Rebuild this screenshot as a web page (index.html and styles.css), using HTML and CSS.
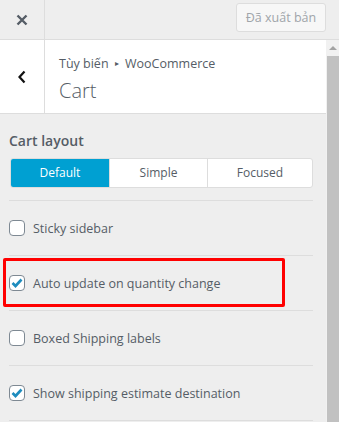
FILE: index.html
```html
<!DOCTYPE html>
<html lang="vi">
<head>
    <meta charset="UTF-8">
    <meta name="viewport" content="width=device-width, initial-scale=1.0">
    <title>Tùy biến - Cart</title>
    <link rel="stylesheet" href="styles.css">
</head>
<body>
    <div class="topbar">
        <div class="close-btn">
            <svg width="12" height="12" viewBox="0 0 12 12"><path d="M1.5 1.5 L10.5 10.5 M10.5 1.5 L1.5 10.5" stroke="#555d66" stroke-width="2.4" fill="none"/></svg>
        </div>
        <div class="topbar-right">
            <button class="publish-button">Đã xuất bản</button>
        </div>
    </div>
    <div class="main">
        <div class="panel">
            <div class="panel-header">
                <div class="back-btn">
                    <svg width="10" height="14" viewBox="0 0 10 14"><path d="M7.5 1.5 L2.5 7 L7.5 12.5" stroke="#111" stroke-width="2.2" fill="none"/></svg>
                </div>
                <div class="panel-title">
                    <div class="breadcrumb">Tùy biến <span class="arrow">▸</span> WooCommerce</div>
                    <div class="title">Cart</div>
                </div>
            </div>
            <div class="controls">
                <div class="control layout-control">
                    <div class="control-label">Cart layout</div>
                    <div class="button-group">
                        <div class="seg seg-default active">Default</div>
                        <div class="seg seg-simple">Simple</div>
                        <div class="seg seg-focused">Focused</div>
                    </div>
                </div>
                <div class="control">
                    <label class="check-row"><span class="checkbox"></span>Sticky sidebar</label>
                </div>
                <div class="control highlighted">
                    <label class="check-row"><span class="checkbox checked"><svg width="12" height="10" viewBox="0 0 12 10"><path d="M1.5 5 L4.5 8 L10.5 1.5" stroke="#1e8cbe" stroke-width="2.6" fill="none"/></svg></span>Auto update on quantity change</label>
                </div>
                <div class="control">
                    <label class="check-row"><span class="checkbox"></span>Boxed Shipping labels</label>
                </div>
                <div class="control">
                    <label class="check-row"><span class="checkbox checked"><svg width="12" height="10" viewBox="0 0 12 10"><path d="M1.5 5 L4.5 8 L10.5 1.5" stroke="#1e8cbe" stroke-width="2.6" fill="none"/></svg></span>Show shipping estimate destination</label>
                </div>
            </div>
        </div>
        <div class="scrollbar">
            <div class="scroll-arrow"></div>
            <div class="scroll-thumb"></div>
        </div>
    </div>
</body>
</html>
```

FILE: styles.css
```css
body {
    margin: 0;
    background: #eee;
    font-family: 'Open Sans', sans-serif;
    color: #555d66;
    height: 422px;
    overflow: hidden;
}

.topbar {
    display: flex;
    height: 39px;
    border-bottom: 1px solid #ddd;
    background: #eee;
}

.close-btn {
    width: 44px;
    border-right: 1px solid #ddd;
    display: flex;
    align-items: center;
    justify-content: center;
}

.topbar-right {
    flex: 1;
    display: flex;
    justify-content: flex-end;
    padding: 3px 13px 0 0;
}

.publish-button {
    width: 90px;
    height: 29px;
    background: #f7f7f7;
    border: 1px solid #ddd;
    border-radius: 3px;
    color: #a0a5aa;
    font-family: 'Open Sans', sans-serif;
    font-size: 12.5px;
    padding: 0;
}

.main {
    display: flex;
    height: 382px;
}

.panel {
    width: 326px;
}

.panel-header {
    display: flex;
    height: 73px;
    background: #fff;
    border-bottom: 1px solid #ddd;
}

.back-btn {
    width: 44px;
    border-right: 1px solid #ddd;
    display: flex;
    align-items: center;
    justify-content: center;
}

.panel-title {
    padding: 14px 0 0 14px;
}

.breadcrumb {
    font-size: 12.5px;
    line-height: 18px;
}

.breadcrumb .arrow {
    font-size: 8px;
    vertical-align: 2px;
    margin: 0 3px;
}

.title {
    font-size: 20px;
    font-weight: 300;
    line-height: 28px;
    margin-top: 4px;
}

.controls {
    padding: 0 13px 0 9px;
}

.control {
    border-bottom: 1px solid #ddd;
    height: 54px;
    display: flex;
    align-items: center;
    position: relative;
}

.layout-control {
    display: block;
    height: auto;
    padding: 17px 0 12px;
}

.control-label {
    font-size: 14px;
    font-weight: 600;
    line-height: 20px;
    margin-bottom: 7px;
}

.button-group {
    display: flex;
    margin-left: 1px;
    border: 1px solid #ddd;
    border-radius: 3px;
    background: #fff;
    overflow: hidden;
}

.seg {
    height: 28px;
    line-height: 28px;
    text-align: center;
    font-size: 12px;
    border-left: 1px solid #ddd;
}

.seg-default {
    width: 98px;
    border-left: none;
}

.seg-simple {
    width: 97px;
}

.seg-focused {
    flex: 1;
}

.seg.active {
    background: #00a0d2;
    color: #fff;
}

.check-row {
    display: flex;
    align-items: center;
    font-size: 12.5px;
}

.checkbox {
    width: 14px;
    height: 14px;
    border: 1px solid #7e8993;
    border-radius: 4px;
    background: #fff;
    margin-right: 8px;
    display: flex;
    align-items: center;
    justify-content: center;
}

.highlighted::before {
    content: "";
    position: absolute;
    left: -6px;
    top: 2px;
    width: 276px;
    height: 43px;
    border: 3px solid #ff0000;
    border-radius: 2px;
}

.scrollbar {
    width: 13px;
    background: #f1f1f1;
    display: flex;
    flex-direction: column;
}

.scroll-arrow {
    height: 16px;
    position: relative;
}

.scroll-arrow::after {
    content: "";
    position: absolute;
    left: 3px;
    top: 6px;
    border-left: 4px solid transparent;
    border-right: 4px solid transparent;
    border-bottom: 4px solid #a3a3a3;
}

.scroll-thumb {
    flex: 1;
    background: #c1c1c1;
    margin-left: 1px;
}
```
